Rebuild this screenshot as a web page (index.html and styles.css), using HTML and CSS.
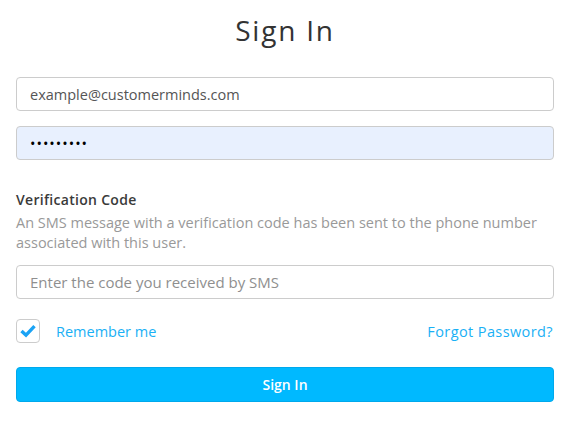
FILE: index.html
```html
<!DOCTYPE html>
<html lang="en">
<head>
	<meta charset="UTF-8">
	<title>Sign In</title>
	<link rel="stylesheet" href="styles.css">
</head>
<body>
	<main class="login">
		<h1 class="title">Sign In</h1>
		<input type="text" class="field email" value="example@customerminds.com">
		<input type="password" class="field password" value="123456789">

		<section class="verify">
			<label class="label">Verification Code</label>
			<p class="help">An SMS message with a verification code has been sent to the phone number associated with this user.</p>
			<input type="text" class="field code" placeholder="Enter the code you received by SMS">
		</section>

		<div class="options">
			<label class="remember">
				<span class="check">
					<svg width="18" height="18" viewBox="0 0 18 18"><path d="M2.5 9 L7 13.2 L15.5 4.2" fill="none" stroke="#1aa3f5" stroke-width="3.4"/></svg>
				</span>
				Remember me
			</label>
			<a href="#" class="forgot">Forgot Password?</a>
		</div>

		<button class="btn">Sign In</button>
	</main>
</body>
</html>
```
FILE: styles.css
```css
* { box-sizing: border-box; }
body {
	margin: 0;
	background: #fff;
	font-family: "Open Sans", "Liberation Sans", sans-serif;
}
main.login {
	padding: 12px 15px 0 16px;
}
h1.title {
	margin: 0;
	font-size: 28px;
	font-weight: 400;
	line-height: 36px;
	color: #333;
	text-align: center;
	letter-spacing: 1.8px;
}
input.field {
	display: block;
	width: 100%;
	height: 34px;
	border: 1px solid #ccc;
	border-radius: 4px;
	padding: 0 13px;
	font: 14.5px "Open Sans", sans-serif;
	color: #555;
	background: #fff;
	outline: none;
}
input.field.email { margin-top: 29px; }
input.field.password {
	margin-top: 15px;
	background: #e8f0fe;
	color: #000;
	letter-spacing: 1px;
}
input.field.code { font-size: 15px; }
input.field::placeholder { color: #8f8f8f; }

section.verify { margin-top: 30px; }
section.verify .label {
	display: block;
	font-size: 14px;
	font-weight: 600;
	letter-spacing: 0.3px;
	line-height: 20px;
	color: #3a3a3a;
}
section.verify p.help {
	margin: 3px 0 12px 0;
	font-size: 14.5px;
	line-height: 20px;
	color: #999;
}

div.options {
	display: flex;
	justify-content: space-between;
	align-items: center;
	margin-top: 20px;
	height: 24px;
}
label.remember {
	display: flex;
	align-items: center;
	gap: 16px;
	font-size: 14.5px;
	color: #1ab0f5;
}
span.check {
	width: 24px;
	height: 24px;
	border: 1px solid #ccc;
	border-radius: 4px;
	display: flex;
	align-items: center;
	justify-content: center;
}
a.forgot {
	font-size: 14.5px;
	letter-spacing: 0.4px;
	color: #1ab0f5;
	text-decoration: none;
	margin-right: 1px;
}

button.btn {
	display: block;
	width: 100%;
	height: 35px;
	margin-top: 24px;
	background: #00b9ff;
	border: 1px solid #00a9ec;
	border-radius: 4px;
	color: #fff;
	font: 600 14px "Open Sans", sans-serif;
	cursor: pointer;
}
```
